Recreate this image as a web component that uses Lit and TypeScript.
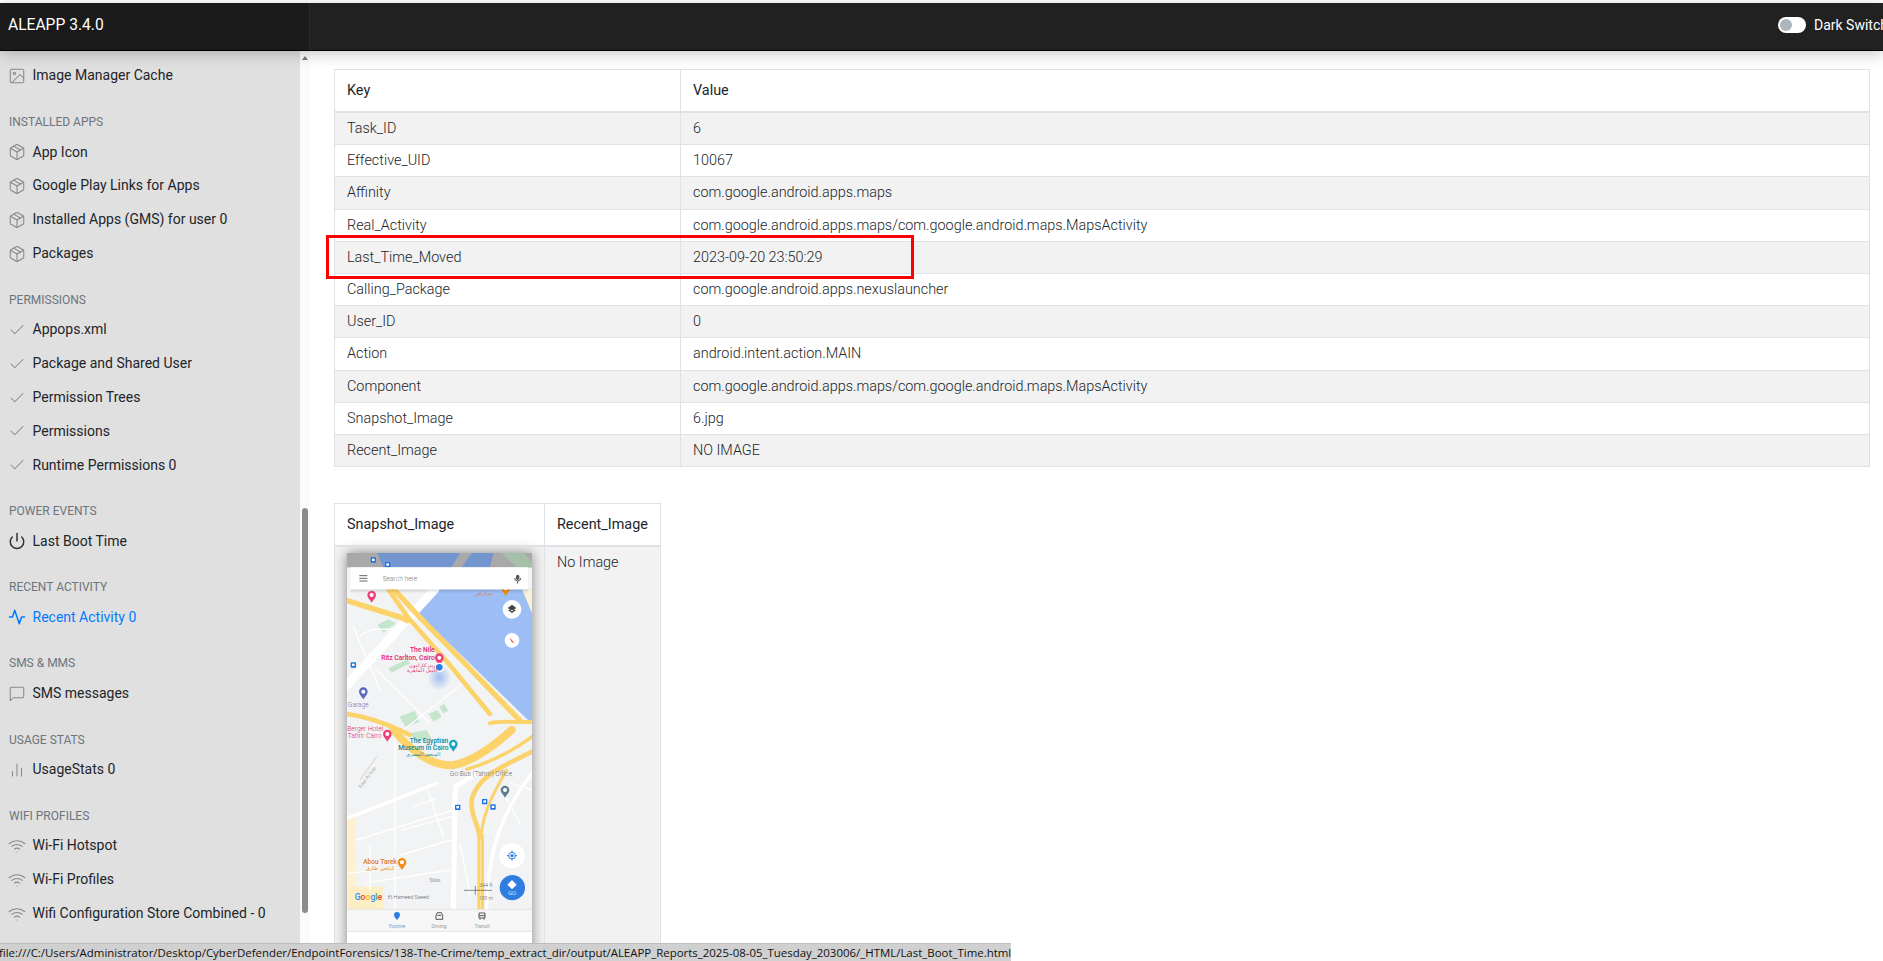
import { LitElement, html, css, svg } from "lit";
import { customElement } from "lit/decorators.js";

const icons: Record<string, unknown> = {
  image: svg`<rect x="3" y="3" width="18" height="18" rx="2"/><circle cx="8.5" cy="8.5" r="1.5"/><polyline points="21 15 16 10 5 21"/>`,
  package: svg`<line x1="16.5" y1="9.4" x2="7.5" y2="4.21"/><path d="M21 16V8a2 2 0 0 0-1-1.73l-7-4a2 2 0 0 0-2 0l-7 4A2 2 0 0 0 3 8v8a2 2 0 0 0 1 1.73l7 4a2 2 0 0 0 2 0l7-4A2 2 0 0 0 21 16z"/><polyline points="3.27 6.96 12 12.01 20.73 6.96"/><line x1="12" y1="22.08" x2="12" y2="12"/>`,
  check: svg`<polyline points="20 6 9 17 4 12"/>`,
  power: svg`<path d="M18.36 6.64a9 9 0 1 1-12.73 0"/><line x1="12" y1="2" x2="12" y2="12"/>`,
  activity: svg`<polyline points="22 12 18 12 15 21 9 3 6 12 2 12"/>`,
  message: svg`<path d="M21 15a2 2 0 0 1-2 2H7l-4 4V5a2 2 0 0 1 2-2h14a2 2 0 0 1 2 2z"/>`,
  bars: svg`<line x1="18" y1="20" x2="18" y2="10"/><line x1="12" y1="20" x2="12" y2="4"/><line x1="6" y1="20" x2="6" y2="14"/>`,
  wifi: svg`<path d="M5 12.55a11 11 0 0 1 14.08 0"/><path d="M1.42 9a16 16 0 0 1 21.16 0"/><path d="M8.53 16.11a6 6 0 0 1 6.95 0"/><line x1="12" y1="20" x2="12.01" y2="20"/>`,
};

type NavItem = { label: string; icon: string; kind?: string };
type NavGroup = { title?: string; items: NavItem[] };

const nav: NavGroup[] = [
  { items: [{ label: "Image Manager Cache", icon: "image" }] },
  {
    title: "Installed Apps",
    items: [
      { label: "App Icon", icon: "package" },
      { label: "Google Play Links for Apps", icon: "package" },
      { label: "Installed Apps (GMS) for user 0", icon: "package" },
      { label: "Packages", icon: "package" },
    ],
  },
  {
    title: "Permissions",
    items: [
      { label: "Appops.xml", icon: "check" },
      { label: "Package and Shared User", icon: "check" },
      { label: "Permission Trees", icon: "check" },
      { label: "Permissions", icon: "check" },
      { label: "Runtime Permissions 0", icon: "check" },
    ],
  },
  { title: "Power Events", items: [{ label: "Last Boot Time", icon: "power", kind: "dark" }] },
  { title: "Recent Activity", items: [{ label: "Recent Activity 0", icon: "activity", kind: "active" }] },
  { title: "SMS & MMS", items: [{ label: "SMS messages", icon: "message" }] },
  { title: "Usage Stats", items: [{ label: "UsageStats 0", icon: "bars" }] },
  {
    title: "Wifi Profiles",
    items: [
      { label: "Wi-Fi Hotspot", icon: "wifi" },
      { label: "Wi-Fi Profiles", icon: "wifi" },
      { label: "Wifi Configuration Store Combined - 0", icon: "wifi" },
    ],
  },
];

const rows = [
  ["Task_ID", "6"],
  ["Effective_UID", "10067"],
  ["Affinity", "com.google.android.apps.maps"],
  ["Real_Activity", "com.google.android.apps.maps/com.google.android.maps.MapsActivity"],
  ["Last_Time_Moved", "2023-09-20 23:50:29"],
  ["Calling_Package", "com.google.android.apps.nexuslauncher"],
  ["User_ID", "0"],
  ["Action", "android.intent.action.MAIN"],
  ["Component", "com.google.android.apps.maps/com.google.android.maps.MapsActivity"],
  ["Snapshot_Image", "6.jpg"],
  ["Recent_Image", "NO IMAGE"],
];

const statusUrl =
  "file:///C:/Users/Administrator/Desktop/CyberDefender/EndpointForensics/138-The-Crime/temp_extract_dir/output/ALEAPP_Reports_2025-08-05_Tuesday_203006/_HTML/Last_Boot_Time.html";

// map coordinates are 3x the page pixels, taken from the reference crops
const pin = (x: number, y: number, color: string) => svg`
  <path d="M${x} ${y + 20}c-5-9-13-14-13-23a13 13 0 0 1 26 0c0 9-8 14-13 23z" fill=${color}/>
  <circle cx=${x} cy=${y - 3} r="6" fill="#fff"/>`;

const stop = (x: number, y: number) => svg`
  <rect x=${x - 8} y=${y - 8} width="16" height="16" rx="2" fill="#1a73e8"/>
  <rect x=${x - 4} y=${y - 4} width="8" height="7" fill="#fff"/>`;

@customElement("map-shot")
export class MapShot extends LitElement {
  static styles = css`
    :host {
      display: block;
      width: 185px;
      height: 400px;
      box-shadow: 0 0 12px rgba(0, 0, 0, 0.45);
    }

    svg {
      display: block;
      font-family: Roboto, "DejaVu Sans", sans-serif;
    }
  `;

  render() {
    return html`
      <svg width="185" height="400" viewBox="81 189 555 1200">
        <defs>
          <radialGradient id="halo">
            <stop offset="0" stop-color="#7fa9ee" stop-opacity="0.7" />
            <stop offset="1" stop-color="#7fa9ee" stop-opacity="0" />
          </radialGradient>
          <linearGradient id="barShade" x1="0" y1="0" x2="0" y2="1">
            <stop offset="0" stop-color="#000" stop-opacity="0.14" />
            <stop offset="1" stop-color="#000" stop-opacity="0" />
          </linearGradient>
        </defs>
        <rect x="81" y="189" width="555" height="1200" fill="#f1f3f4" />

        <polygon points="345,298 636,298 636,702 290,365" fill="#9cbef5" />
        <polygon points="606,298 636,298 636,370" fill="#f7f1da" />
        <rect x="81" y="980" width="24" height="210" fill="#fdf1cf" />
        <rect x="81" y="1190" width="110" height="68" fill="#fcefc6" />

        <g fill="#c5e6cd">
          <polygon points="172,405 205,388 228,400 190,428" />
          <polygon points="205,535 262,508 270,520 215,548" />
          <polygon points="238,680 285,662 298,695 258,712" />
          <polygon points="325,672 352,660 365,680 340,695" />
          <polygon points="358,650 372,642 385,662 370,670" />
          <polygon points="270,730 320,720 335,745 290,755" />
        </g>

        <g fill="none" stroke="#fff" stroke-linecap="round">
          <path d="M81 585L345 298" stroke-width="26" />
          <path d="M400 1258L406 890L470 850" stroke-width="15" />
          <path d="M500 1258C505 1120 520 1000 636 850" stroke-width="10" />
          <path d="M81 985L350 880" stroke-width="10" />
          <g stroke-width="4">
            <path d="M225 720V1258" />
            <path d="M120 440C160 400 220 430 240 410" />
            <path d="M100 410L180 600" />
            <path d="M170 540L330 700" />
            <path d="M250 720L430 580" />
            <path d="M110 1050L400 960" />
            <path d="M150 1065V1200M320 890L370 1040M270 910L340 880M280 950L350 925" />
            <path d="M130 1180L390 1140M245 1020L395 980M240 1095L395 1050M80 1150L230 1135" />
            <path d="M420 1060L450 1210M575 880L636 900M545 900L600 1000" />
            <path d="M120 870L170 800" stroke="#ddd" />
          </g>
        </g>

        <g fill="none" stroke="#fbd36a" stroke-linecap="round">
          <path d="M222 298L290 372L410 495L600 692" stroke-width="16" />
          <path d="M205 298L262 380L385 520L510 672" stroke-width="14" />
          <path d="M81 332L242 382L262 392" stroke-width="16" />
          <path d="M81 672C140 680 200 700 270 735" stroke-width="14" />
          <path d="M510 700C550 690 600 700 636 695" stroke-width="12" />
          <path d="M220 720C280 790 340 830 400 825C460 815 520 770 575 720" stroke-width="24" />
          <path d="M636 740C570 790 500 820 440 838" stroke-width="10" />
          <path d="M636 785C545 830 470 860 455 930C450 980 478 1000 482 1060" stroke-width="14" />
          <path d="M560 840C525 900 492 960 484 1030" stroke-width="9" />
          <path d="M482 1040V1258" stroke-width="20" />
          <path d="M482 1050V1258" stroke="#fdeaa8" stroke-width="3" />
        </g>

        ${pin(557, 298, "#f28c1a")}

        <rect x="81" y="189" width="555" height="43" fill="#a9a9a9" />
        <polygon points="172,189 420,189 395,232 190,232" fill="#7396d0" />
        <polygon points="455,189 520,189 510,232 425,232" fill="#7396d0" />
        <polygon points="545,189 610,189 636,215 636,232 590,232" fill="#a6c0a8" />
        ${stop(160, 210)} ${stop(203, 224)} ${stop(100, 525)} ${stop(413, 952)} ${stop(494, 935)} ${stop(519, 951)}

        <rect x="92" y="298" width="532" height="12" fill="url(#barShade)" />
        <rect x="92" y="232" width="532" height="66" fill="#fff" />
        <path d="M118 257H142M118 265H142M118 273H142" stroke="#666" stroke-width="3" />
        <text x="188" y="272" font-size="20" fill="#777">Search here</text>
        <rect x="588" y="254" width="10" height="16" rx="5" fill="#555" />
        <path d="M584 264a9 9 0 0 0 18 0M593 273v8" fill="none" stroke="#555" stroke-width="3" />

        ${pin(155, 318, "#ec407a")} ${pin(358, 506, "#ec407a")} ${pin(130, 608, "#5c6bc0")}
        ${pin(202, 735, "#ec407a")} ${pin(400, 765, "#12a5bd")} ${pin(555, 903, "#5f7d8c")}
        ${pin(246, 1120, "#f28c1a")}

        <ellipse cx="358" cy="562" rx="36" ry="40" fill="url(#halo)" />
        <circle cx="358" cy="532" r="14" fill="#fff" />
        <circle cx="358" cy="532" r="10" fill="#2f7de1" />

        <g font-size="20" text-anchor="middle">
          <g fill="#e5266e">
            <text x="307" y="487" font-weight="500">The Nile</text>
            <text x="264" y="509" font-weight="500">Ritz Carlton, Cairo</text>
            <text x="306" y="530" font-size="15">ريتز كارلتون</text>
            <text x="306" y="546" font-size="15">النيل القاهرة</text>
            <text x="136" y="722">Berger Hotel</text>
            <text x="134" y="745">Tahrir Cairo</text>
          </g>
          <g fill="#12879b">
            <text x="327" y="758" font-weight="500">The Egyptian</text>
            <text x="310" y="781" font-weight="500">Museum in Cairo</text>
            <text x="310" y="798" font-size="14">المتحف المصري</text>
          </g>
          <text x="492" y="316" fill="#e07b12" font-size="15">مركز فن</text>
          <text x="483" y="857" fill="#5f6f78">Go Bus (Tahrir) Office</text>
          <text x="115" y="652" fill="#6a76b8">Garage</text>
          <text x="180" y="1122" fill="#e07b12" font-weight="500">Abou Tarek</text>
          <text x="180" y="1140" fill="#e07b12" font-size="15">كبابجي طارق</text>
          <text x="345" y="1177" fill="#666" font-size="16">Silas</text>
          <text x="265" y="1228" fill="#666" font-size="16">El-Hameed Saeed</text>
          <text x="146" y="865" fill="#888" font-size="15" transform="rotate(-52 146 865)">Kasr Al-Nile</text>
          <text x="498" y="1192" fill="#555" font-size="15">344 ft</text>
          <text x="498" y="1229" fill="#555" font-size="15">100 m</text>
        </g>
        <path d="M432 1201H516M466 1188V1214" stroke="#555" stroke-width="2" fill="none" />

        <text x="104" y="1230" font-size="26" font-weight="500"
          ><tspan fill="#4285f4">G</tspan><tspan fill="#ea4335">o</tspan><tspan fill="#fbbc05">o</tspan><tspan
            fill="#4285f4"
            >g</tspan
          ><tspan fill="#34a853">l</tspan><tspan fill="#ea4335">e</tspan></text
        >

        <circle cx="576" cy="358" r="28" fill="#fff" />
        <path d="M576 344l13 10-13 10-13-10zM563 360l13 9 13-9" fill="#444" />
        <circle cx="576" cy="451" r="22" fill="#fff" />
        <path d="M569 442l14 18-8-4z" fill="#e53935" />
        <circle cx="576" cy="1097" r="38" fill="#fff" />
        <circle cx="576" cy="1097" r="10" fill="none" stroke="#2f7de1" stroke-width="3" />
        <circle cx="576" cy="1097" r="5" fill="#2f7de1" />
        <path d="M576 1082v6M576 1106v6M561 1097h6M585 1097h6" stroke="#2f7de1" stroke-width="3" />
        <circle cx="577" cy="1193" r="38" fill="#2f7de1" />
        <path d="M576 1170l14 14-14 14-14-14z" fill="#fff" />
        <text x="576" y="1216" font-size="18" fill="#fff" text-anchor="middle">GO</text>

        <rect x="81" y="1258" width="555" height="67" fill="#f6f6f6" />
        <path d="M81 1258H636M81 1325H636" stroke="#dcdcdc" stroke-width="2" />
        <rect x="81" y="1326" width="555" height="63" fill="#fff" />
        <path d="M231 1290c-4-6-9-9-9-15a9 9 0 0 1 18 0c0 6-5 9-9 15z" fill="#2f7de1" />
        <path d="M348 1276l4-8h12l4 8v12h-20zM352 1276h12" fill="none" stroke="#555" stroke-width="3" />
        <path d="M477 1269h18v15h-18zM477 1277h18M480 1284v5M492 1284v5" fill="none" stroke="#555" stroke-width="3" />
        <g font-size="15" text-anchor="middle">
          <text x="231" y="1313" fill="#2f7de1">Explore</text>
          <text x="357" y="1313" fill="#666">Driving</text>
          <text x="486" y="1313" fill="#666">Transit</text>
        </g>
      </svg>
    `;
  }
}

@customElement("app-root")
export class AppRoot extends LitElement {
  static styles = css`
    :host {
      display: block;
      position: relative;
      height: 961px;
      overflow: hidden;
      padding-top: 3px;
      box-sizing: border-box;
      font-family: Roboto, sans-serif;
      font-size: 14px;
      line-height: 21px;
      color: #212529;
      background: #fff;
    }

    .topbar {
      position: relative;
      z-index: 2;
      display: flex;
      height: 47px;
      background: #212121;
      border-bottom: 1px solid #000;
      box-shadow: 0 3px 14px rgba(0, 0, 0, 0.22);
    }

    .brand {
      width: 310px;
      box-sizing: border-box;
      padding-left: 8px;
      background: #1a1a1a;
      color: #fff;
      font-size: 15.6px;
      line-height: 45px;
      border-right: 1px solid #2a2a2a;
    }

    .dark-switch {
      margin-left: auto;
      display: flex;
      align-items: center;
      gap: 8px;
      width: 105px;
      flex: none;
      color: #fff;
      white-space: nowrap;
      padding-bottom: 3px;
    }

    .toggle {
      flex: none;
      width: 28px;
      height: 16px;
      border-radius: 8px;
      background: #fff;
      display: flex;
      align-items: center;
      padding-left: 2px;
      box-sizing: border-box;
    }

    .toggle i {
      width: 12px;
      height: 12px;
      border-radius: 50%;
      background: #adb5bd;
    }

    .body {
      display: flex;
      height: 910px;
    }

    .sidebar {
      flex: none;
      width: 300px;
      box-sizing: border-box;
      padding-top: 8px;
      background: #e0e0e0;
      overflow: hidden;
    }

    .group {
      margin-bottom: 20px;
    }

    .group h6 {
      margin: 0 0 4.2px;
      padding-left: 9px;
      font-size: 12px;
      font-weight: 400;
      line-height: 18px;
      color: #6c757d;
      text-transform: uppercase;
    }

    .link {
      display: flex;
      align-items: center;
      gap: 6.5px;
      height: 33.9px;
      padding-left: 8px;
      white-space: nowrap;
    }

    .link svg {
      flex: none;
      width: 18px;
      height: 18px;
      fill: none;
      stroke: #888;
      stroke-width: 1.4;
      stroke-linecap: round;
      stroke-linejoin: round;
    }

    .link.dark svg {
      stroke: #333;
      stroke-width: 2;
    }

    .link.active {
      color: #007bff;
    }

    .link.active svg {
      stroke: #007bff;
      stroke-width: 2;
    }

    .scroll {
      flex: none;
      width: 10px;
      box-sizing: border-box;
      padding: 0 2px;
      background: #fbfbfb;
    }

    .scroll .arrow {
      width: 0;
      margin-top: 5px;
      border: 3px solid transparent;
      border-top: 0;
      border-bottom: 4px solid #777;
    }

    .scroll .thumb {
      margin-top: 448px;
      height: 405px;
      border-radius: 3px;
      background: #8c8c8c;
    }

    main {
      flex: 1;
      min-width: 0;
      padding: 18px 13px 0 24px;
    }

    .report {
      position: relative;
      margin-bottom: 36px;
    }

    table {
      border-collapse: collapse;
      border: 1px solid #dee2e6;
      font-size: 14.4px;
      font-weight: 300;
    }

    .full {
      width: 100%;
      table-layout: fixed;
    }

    .full th:first-child {
      width: 321px;
    }

    th {
      text-align: left;
      font-weight: 400;
      padding: 10px 12px;
      border: 1px solid #dee2e6;
      border-bottom-width: 2px;
    }

    td {
      padding: 5px 12px;
      line-height: 21.2px;
      border: 1px solid #dee2e6;
      vertical-align: top;
    }

    tbody tr:nth-child(odd) {
      background: #f2f2f2;
    }

    .highlight {
      position: absolute;
      left: -8px;
      top: 166px;
      width: 588px;
      height: 44px;
      box-sizing: border-box;
      border: 3px solid #f00;
    }

    .snap td {
      height: 420px;
    }

    .snap td:first-child {
      padding-top: 6px;
    }

    .status {
      position: absolute;
      left: 0;
      bottom: 0;
      width: 1011px;
      height: 18px;
      background: #d0d0d0;
      border-top: 1px solid #bdbdbd;
      box-sizing: border-box;
      font-family: "Open Sans", sans-serif;
      font-size: 11.45px;
      line-height: 17px;
      text-indent: -1px;
      color: #111;
      white-space: nowrap;
      overflow: hidden;
    }
  `;

  render() {
    return html`
      <header class="topbar">
        <div class="brand">ALEAPP 3.4.0</div>
        <div class="dark-switch">
          <span class="toggle"><i></i></span>
          Dark Switch
        </div>
      </header>
      <div class="body">
        <nav class="sidebar">
          ${nav.map(
            (group) => html`
              <div class="group">
                ${group.title ? html`<h6>${group.title}</h6>` : ""}
                ${group.items.map(
                  (item) => html`
                    <div class="link ${item.kind ?? ""}">
                      <svg viewBox="0 0 24 24">${icons[item.icon]}</svg>
                      ${item.label}
                    </div>
                  `
                )}
              </div>
            `
          )}
        </nav>
        <div class="scroll">
          <div class="arrow"></div>
          <div class="thumb"></div>
        </div>
        <main>
          <div class="report">
            <table class="full">
              <thead>
                <tr><th>Key</th><th>Value</th></tr>
              </thead>
              <tbody>
                ${rows.map(([key, value]) => html`<tr><td>${key}</td><td>${value}</td></tr>`)}
              </tbody>
            </table>
            <div class="highlight"></div>
          </div>
          <table class="snap">
            <thead>
              <tr><th>Snapshot_Image</th><th>Recent_Image</th></tr>
            </thead>
            <tbody>
              <tr>
                <td><map-shot></map-shot></td>
                <td>No Image</td>
              </tr>
            </tbody>
          </table>
        </main>
      </div>
      <div class="status">${statusUrl}</div>
    `;
  }
}
